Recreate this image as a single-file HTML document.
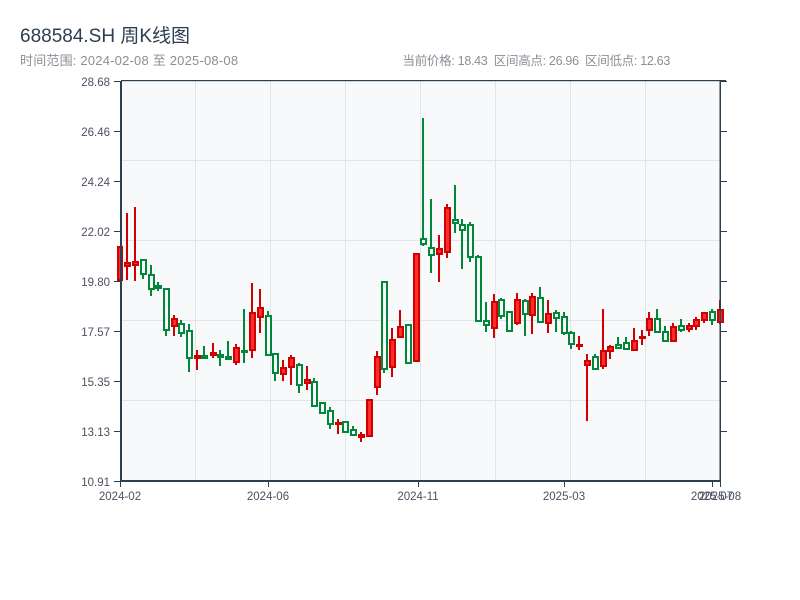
<!DOCTYPE html>
<html><head><meta charset="utf-8"><style>
html,body{margin:0;padding:0;background:#fff;width:800px;height:600px;overflow:hidden}
body{font-family:"Liberation Sans","Noto Sans CJK SC",sans-serif;position:relative}
.t{position:absolute;left:20px;top:21px;font-size:19px;color:#2c3e50;white-space:nowrap}
.s{position:absolute;left:20px;top:50px;font-size:13px;color:#8a8f96;white-space:nowrap;letter-spacing:0.2px}
.r{position:absolute;right:130px;top:50px;font-size:12.5px;color:#8a8f96;white-space:nowrap;letter-spacing:-0.3px}
svg{position:absolute;left:0;top:0}
</style></head><body>
<div class="t">688584.SH 周K线图</div>
<div class="s">时间范围: 2024-02-08 至 2025-08-08</div>
<div class="r">当前价格: 18.43&nbsp; 区间高点: 26.96&nbsp; 区间低点: 12.63</div>
<svg width="800" height="600" xmlns="http://www.w3.org/2000/svg">
<rect x="121" y="81" width="599" height="400" fill="#f7f9fb"/>
<g stroke="#e1e4e8" stroke-width="1">
<line x1="195.5" y1="81" x2="195.5" y2="481"/><line x1="270.5" y1="81" x2="270.5" y2="481"/>
<line x1="345.5" y1="81" x2="345.5" y2="481"/><line x1="420.5" y1="81" x2="420.5" y2="481"/>
<line x1="495.5" y1="81" x2="495.5" y2="481"/><line x1="570.5" y1="81" x2="570.5" y2="481"/>
<line x1="645.5" y1="81" x2="645.5" y2="481"/>
<line x1="121" y1="160.5" x2="720" y2="160.5"/><line x1="121" y1="240.5" x2="720" y2="240.5"/>
<line x1="121" y1="320.5" x2="720" y2="320.5"/><line x1="121" y1="400.5" x2="720" y2="400.5"/>
</g>
<g stroke-width="2">
<g stroke="#d00000" fill="#ff2a2a">
<line x1="120" y1="247" x2="120" y2="281"/><rect x="118" y="247" width="4" height="33"/>
<line x1="127" y1="213" x2="127" y2="280"/><rect x="125" y="263" width="5" height="3"/>
<line x1="135" y1="207" x2="135" y2="281"/><rect x="133" y="262" width="5" height="3"/>
<line x1="174" y1="315" x2="174" y2="336"/><rect x="172" y="319" width="5" height="7"/>
<line x1="197" y1="350" x2="197" y2="370"/><rect x="195" y="356" width="5" height="2"/>
<line x1="213" y1="343" x2="213" y2="358"/><rect x="211" y="353" width="5" height="2"/>
<line x1="236" y1="344" x2="236" y2="365"/><rect x="234" y="348" width="5" height="14"/>
<line x1="252" y1="283" x2="252" y2="358"/><rect x="250" y="313" width="5" height="37"/>
<line x1="260" y1="289" x2="260" y2="333"/><rect x="258" y="308" width="5" height="9"/>
<line x1="283" y1="360" x2="283" y2="381"/><rect x="281" y="368" width="5" height="6"/>
<line x1="291" y1="355" x2="291" y2="385"/><rect x="289" y="358" width="5" height="9"/>
<line x1="307" y1="366" x2="307" y2="390"/><rect x="305" y="380" width="5" height="3"/>
<line x1="338" y1="419" x2="338" y2="434"/><rect x="336" y="423" width="5" height="1"/>
<line x1="361" y1="432" x2="361" y2="442"/><rect x="359" y="435" width="5" height="2"/>
<line x1="369" y1="399" x2="369" y2="437"/><rect x="367" y="400" width="5" height="36"/>
<line x1="377" y1="351" x2="377" y2="395"/><rect x="375" y="357" width="5" height="30"/>
<line x1="392" y1="328" x2="392" y2="377"/><rect x="390" y="340" width="5" height="27"/>
<line x1="400" y1="310" x2="400" y2="337"/><rect x="398" y="327" width="5" height="10"/>
<line x1="416" y1="254" x2="416" y2="361"/><rect x="414" y="254" width="5" height="107"/>
<line x1="439" y1="235" x2="439" y2="282"/><rect x="437" y="249" width="5" height="5"/>
<line x1="447" y1="204" x2="447" y2="258"/><rect x="445" y="208" width="5" height="44"/>
<line x1="494" y1="294" x2="494" y2="338"/><rect x="492" y="302" width="5" height="26"/>
<line x1="517" y1="293" x2="517" y2="325"/><rect x="515" y="300" width="5" height="23"/>
<line x1="532" y1="293" x2="532" y2="334"/><rect x="530" y="297" width="5" height="18"/>
<line x1="548" y1="300" x2="548" y2="333"/><rect x="546" y="314" width="5" height="9"/>
<line x1="579" y1="336" x2="579" y2="350"/><rect x="577" y="345" width="5" height="1"/>
<line x1="587" y1="354" x2="587" y2="421"/><rect x="585" y="361" width="5" height="4"/>
<line x1="603" y1="309" x2="603" y2="369"/><rect x="601" y="351" width="5" height="15"/>
<line x1="610" y1="345" x2="610" y2="359"/><rect x="608" y="347" width="5" height="4"/>
<line x1="634" y1="328" x2="634" y2="351"/><rect x="632" y="341" width="5" height="9"/>
<line x1="642" y1="330" x2="642" y2="345"/><rect x="640" y="337" width="5" height="1"/>
<line x1="649" y1="312" x2="649" y2="336"/><rect x="647" y="319" width="5" height="11"/>
<line x1="673" y1="323" x2="673" y2="342"/><rect x="671" y="327" width="5" height="14"/>
<line x1="689" y1="323" x2="689" y2="332"/><rect x="687" y="326" width="5" height="3"/>
<line x1="696" y1="317" x2="696" y2="330"/><rect x="694" y="320" width="5" height="6"/>
<line x1="704" y1="313" x2="704" y2="323"/><rect x="702" y="313" width="5" height="7"/>
<line x1="720" y1="300" x2="720" y2="324"/><rect x="718" y="310" width="5" height="12"/>
</g>
<g stroke="#00873a" fill="#f7f9fb">
<line x1="143" y1="260" x2="143" y2="279"/><rect x="141" y="260" width="5" height="14"/>
<line x1="151" y1="265" x2="151" y2="296"/><rect x="149" y="275" width="5" height="14"/>
<line x1="158" y1="282" x2="158" y2="291"/><rect x="156" y="286" width="5" height="2"/>
<line x1="166" y1="289" x2="166" y2="336"/><rect x="164" y="289" width="5" height="41"/>
<line x1="181" y1="320" x2="181" y2="337"/><rect x="179" y="324" width="5" height="9"/>
<line x1="189" y1="324" x2="189" y2="372"/><rect x="187" y="331" width="5" height="27"/>
<line x1="204" y1="346" x2="204" y2="358"/><rect x="202" y="356" width="5" height="2"/>
<line x1="220" y1="350" x2="220" y2="366"/><rect x="218" y="355" width="5" height="2"/>
<line x1="228" y1="341" x2="228" y2="359"/><rect x="226" y="357" width="5" height="2"/>
<line x1="244" y1="309" x2="244" y2="363"/><rect x="242" y="351" width="5" height="1"/>
<line x1="268" y1="311" x2="268" y2="356"/><rect x="266" y="316" width="5" height="39"/>
<line x1="275" y1="353" x2="275" y2="381"/><rect x="273" y="354" width="5" height="19"/>
<line x1="299" y1="363" x2="299" y2="393"/><rect x="297" y="365" width="5" height="20"/>
<line x1="314" y1="378" x2="314" y2="407"/><rect x="312" y="382" width="5" height="24"/>
<line x1="322" y1="403" x2="322" y2="414"/><rect x="320" y="403" width="5" height="10"/>
<line x1="330" y1="407" x2="330" y2="429"/><rect x="328" y="411" width="5" height="13"/>
<line x1="345" y1="421" x2="345" y2="433"/><rect x="343" y="422" width="5" height="10"/>
<line x1="353" y1="426" x2="353" y2="435"/><rect x="351" y="430" width="5" height="5"/>
<line x1="384" y1="282" x2="384" y2="373"/><rect x="382" y="282" width="5" height="87"/>
<line x1="408" y1="324" x2="408" y2="363"/><rect x="406" y="325" width="5" height="38"/>
<line x1="423" y1="118" x2="423" y2="246"/><rect x="421" y="239" width="5" height="5"/>
<line x1="431" y1="199" x2="431" y2="273"/><rect x="429" y="248" width="5" height="7"/>
<line x1="455" y1="185" x2="455" y2="233"/><rect x="453" y="220" width="5" height="3"/>
<line x1="462" y1="219" x2="462" y2="269"/><rect x="460" y="225" width="5" height="5"/>
<line x1="470" y1="222" x2="470" y2="262"/><rect x="468" y="225" width="5" height="32"/>
<line x1="478" y1="255" x2="478" y2="321"/><rect x="476" y="257" width="5" height="64"/>
<line x1="486" y1="302" x2="486" y2="332"/><rect x="484" y="321" width="5" height="4"/>
<line x1="501" y1="298" x2="501" y2="319"/><rect x="499" y="300" width="5" height="16"/>
<line x1="509" y1="312" x2="509" y2="331"/><rect x="507" y="312" width="5" height="19"/>
<line x1="525" y1="299" x2="525" y2="336"/><rect x="523" y="301" width="5" height="13"/>
<line x1="540" y1="287" x2="540" y2="323"/><rect x="538" y="298" width="5" height="24"/>
<line x1="556" y1="310" x2="556" y2="332"/><rect x="554" y="313" width="5" height="5"/>
<line x1="564" y1="312" x2="564" y2="335"/><rect x="562" y="317" width="5" height="16"/>
<line x1="571" y1="331" x2="571" y2="349"/><rect x="569" y="333" width="5" height="11"/>
<line x1="595" y1="354" x2="595" y2="370"/><rect x="593" y="357" width="5" height="12"/>
<line x1="618" y1="337" x2="618" y2="349"/><rect x="616" y="345" width="5" height="3"/>
<line x1="626" y1="337" x2="626" y2="349"/><rect x="624" y="343" width="5" height="6"/>
<line x1="657" y1="309" x2="657" y2="332"/><rect x="655" y="319" width="5" height="13"/>
<line x1="665" y1="326" x2="665" y2="342"/><rect x="663" y="332" width="5" height="9"/>
<line x1="681" y1="319" x2="681" y2="332"/><rect x="679" y="326" width="5" height="4"/>
<line x1="712" y1="309" x2="712" y2="325"/><rect x="710" y="312" width="5" height="8"/>
</g>
</g>
<rect x="121" y="80" width="605" height="1.2" fill="#2c3e50"/>
<rect x="120" y="81" width="2" height="401" fill="#2c3e50"/>
<rect x="719.5" y="81" width="1.5" height="401" fill="#2c3e50"/>
<rect x="120" y="480" width="601" height="2" fill="#2c3e50"/>
<g stroke="#2c3e50" stroke-width="1">
<line x1="114" y1="81.5" x2="120" y2="81.5"/><line x1="114" y1="131.5" x2="120" y2="131.5"/>
<line x1="114" y1="181.5" x2="120" y2="181.5"/><line x1="114" y1="231.5" x2="120" y2="231.5"/>
<line x1="114" y1="281.5" x2="120" y2="281.5"/><line x1="114" y1="331.5" x2="120" y2="331.5"/>
<line x1="114" y1="381.5" x2="120" y2="381.5"/><line x1="114" y1="431.5" x2="120" y2="431.5"/>
<line x1="114" y1="481.5" x2="120" y2="481.5"/>
<line x1="721" y1="81.5" x2="727" y2="81.5"/><line x1="721" y1="131.5" x2="727" y2="131.5"/>
<line x1="721" y1="181.5" x2="727" y2="181.5"/><line x1="721" y1="231.5" x2="727" y2="231.5"/>
<line x1="721" y1="281.5" x2="727" y2="281.5"/><line x1="721" y1="331.5" x2="727" y2="331.5"/>
<line x1="721" y1="381.5" x2="727" y2="381.5"/><line x1="721" y1="431.5" x2="727" y2="431.5"/>
<line x1="120.5" y1="482" x2="120.5" y2="487"/><line x1="268.5" y1="482" x2="268.5" y2="487"/>
<line x1="418.5" y1="482" x2="418.5" y2="487"/><line x1="564.5" y1="482" x2="564.5" y2="487"/>
<line x1="712.5" y1="482" x2="712.5" y2="487"/><line x1="720.5" y1="482" x2="720.5" y2="487"/>
</g>
<g font-family="Liberation Sans, sans-serif" font-size="11.5" fill="#4a5260" text-anchor="end">
<text x="110" y="86">28.68</text><text x="110" y="136">26.46</text><text x="110" y="186">24.24</text>
<text x="110" y="236">22.02</text><text x="110" y="286">19.80</text><text x="110" y="336">17.57</text>
<text x="110" y="386">15.35</text><text x="110" y="436">13.13</text><text x="110" y="486">10.91</text>
</g>
<g font-family="Liberation Sans, sans-serif" font-size="11.5" fill="#4a5260" text-anchor="middle">
<text x="120" y="500">2024-02</text><text x="268" y="500">2024-06</text>
<text x="418" y="500">2024-11</text><text x="564" y="500">2025-03</text>
<text x="712" y="500">2025-07</text><text x="720" y="500">2025-08</text>
</g>
</svg>
</body></html>
